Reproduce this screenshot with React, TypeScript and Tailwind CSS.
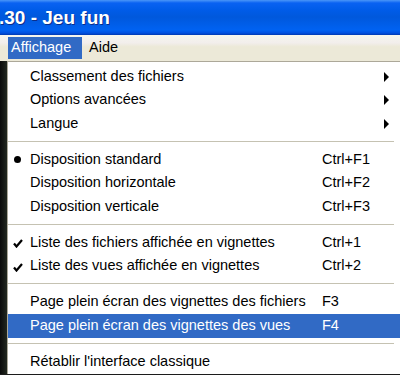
import React from 'react';

type Item =
  | { kind: 'sep' }
  | { kind: 'item'; label: string; shortcut?: string; mark?: 'dot' | 'check'; submenu?: boolean; active?: boolean };

const items: Item[] = [
  { kind: 'item', label: 'Classement des fichiers', submenu: true },
  { kind: 'item', label: 'Options avancées', submenu: true },
  { kind: 'item', label: 'Langue', submenu: true },
  { kind: 'sep' },
  { kind: 'item', label: 'Disposition standard', shortcut: 'Ctrl+F1', mark: 'dot' },
  { kind: 'item', label: 'Disposition horizontale', shortcut: 'Ctrl+F2' },
  { kind: 'item', label: 'Disposition verticale', shortcut: 'Ctrl+F3' },
  { kind: 'sep' },
  { kind: 'item', label: 'Liste des fichiers affichée en vignettes', shortcut: 'Ctrl+1', mark: 'check' },
  { kind: 'item', label: 'Liste des vues affichée en vignettes', shortcut: 'Ctrl+2', mark: 'check' },
  { kind: 'sep' },
  { kind: 'item', label: 'Page plein écran des vignettes des fichiers', shortcut: 'F3' },
  { kind: 'item', label: 'Page plein écran des vignettes des vues', shortcut: 'F4', active: true },
  { kind: 'sep' },
  { kind: 'item', label: "Rétablir l'interface classique" },
];

function Mark({ type, active }: { type?: 'dot' | 'check'; active?: boolean }) {
  const color = active ? '#ffffff' : '#000000';
  if (type === 'dot') {
    return <div className="w-[7px] h-[7px] rounded-full ml-[6px]" style={{ background: color }} />;
  }
  if (type === 'check') {
    return (
      <svg width="10" height="9" viewBox="0 0 10 9" className="ml-[5px] mt-[2px]">
        <path d="M1 4.5 L3.5 7.5 L9 1" fill="none" stroke={color} strokeWidth="2.2" />
      </svg>
    );
  }
  return null;
}

export default function App() {
  return (
    <div className="w-[400px] h-[375px] overflow-hidden bg-[#1c1c1c]" style={{ fontFamily: '"Liberation Sans", Arial, sans-serif' }}>
      {/* title bar */}
      <div className="h-[35px] flex items-center bg-[linear-gradient(to_bottom,#4a96f8_0px,#0a62f2_3px,#005ce8_10px,#0058dc_17px,#0062f2_30px,#0050e0_33px,#0038b0_35px)]">
        <span className="text-white font-bold text-[19px] -ml-[1px] mt-[1px] [text-shadow:1px_1px_0_#0a2e8c]">.30 - Jeu fun</span>
      </div>

      {/* menubar */}
      <div className="h-[26px] flex items-start pl-[8px] text-[14.5px] bg-[linear-gradient(to_bottom,#f6f6ee_0%,#f2eeec_30%,#ece9d8_45%,#ece9d8_100%)]">
        <div className="mt-[2px] h-[22px] w-[74px] bg-[#316ac5] text-white flex items-center pl-[3px]">Affichage</div>
        <div className="mt-[2px] h-[22px] flex items-center pl-[7px] text-black">Aide</div>
      </div>

      <div className="flex">
        <div className="w-[7px] bg-[linear-gradient(to_right,#0a0a0a,#222820)]" />
        {/* dropdown menu */}
        <div className="flex-1 bg-white border-l border-t border-[#aca899] pt-[3px] text-[14.5px] text-black">
          {items.map((it, i) =>
            it.kind === 'sep' ? (
              <div key={i} className="h-[12.5px] flex items-center pr-[6px]">
                <div className="w-full h-[2px] bg-[#c5c2b2] border-b border-white" />
              </div>
            ) : (
              <div
                key={i}
                className={`h-[23.5px] flex items-center ${it.active ? 'bg-[#316ac5] text-white' : ''}`}
              >
                <div className="w-[22px] flex items-center">
                  <Mark type={it.mark} active={it.active} />
                </div>
                <div className="w-[292px] whitespace-nowrap">{it.label}</div>
                <div className="flex-1 whitespace-nowrap">{it.shortcut}</div>
                {it.submenu && (
                  <svg width="6" height="10" viewBox="0 0 6 10" className="mr-[10px]">
                    <path d="M0 0 L5 5 L0 10 Z" fill="#000" />
                  </svg>
                )}
              </div>
            ),
          )}
        </div>
      </div>
    </div>
  );
}
